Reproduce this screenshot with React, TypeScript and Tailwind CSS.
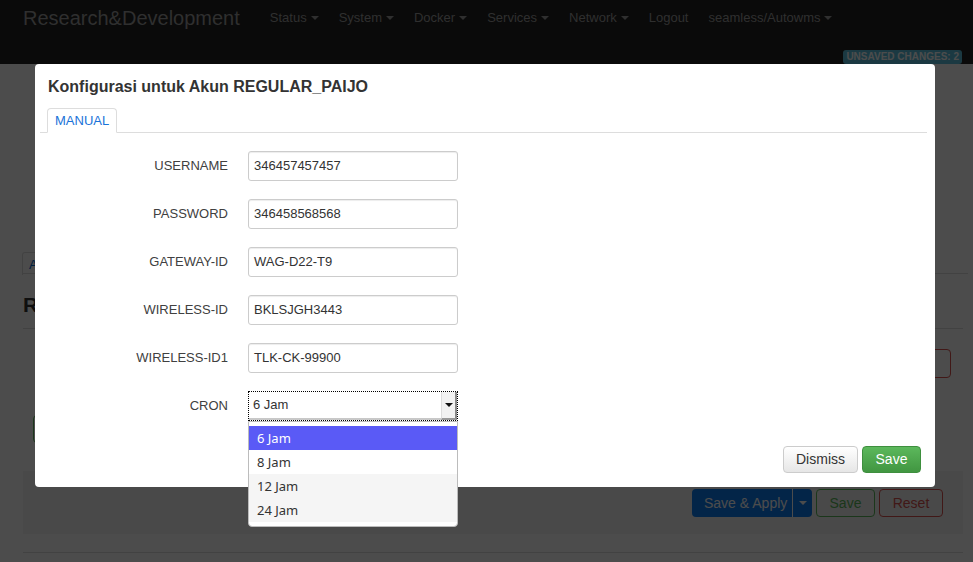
import React from "react";

const MENU = [
  { label: "Status", caret: true },
  { label: "System", caret: true },
  { label: "Docker", caret: true },
  { label: "Services", caret: true },
  { label: "Network", caret: true },
  { label: "Logout", caret: false },
  { label: "seamless/Autowms", caret: true },
];

const FIELDS = [
  { label: "USERNAME", value: "346457457457" },
  { label: "PASSWORD", value: "346458568568" },
  { label: "GATEWAY-ID", value: "WAG-D22-T9" },
  { label: "WIRELESS-ID", value: "BKLSJGH3443" },
  { label: "WIRELESS-ID1", value: "TLK-CK-99900" },
];

const CRON_OPTIONS = ["6 Jam", "8 Jam", "12 Jam", "24 Jam"];

const Caret: React.FC<{ className?: string }> = ({ className }) => (
  <span
    className={`inline-block w-0 h-0 border-l-[4px] border-r-[4px] border-t-[4px] border-l-transparent border-r-transparent ${className ?? ""}`}
  />
);

const Navbar: React.FC = () => (
  <div className="h-[64px] bg-[#222222] flex flex-col">
    <div className="h-[36px] flex items-center pl-[23px]">
      <span className="text-[20px] text-[#9d9d9d] leading-none">Research&amp;Development</span>
      <div className="flex items-center gap-[20px] ml-[30px] text-[13px] text-[#9d9d9d]">
        {MENU.map((m) => (
          <span key={m.label} className="flex items-center">
            {m.label}
            {m.caret && <Caret className="ml-[4px] border-t-[#9d9d9d]" />}
          </span>
        ))}
      </div>
    </div>
    <div className="flex justify-end pr-[11px] mt-[15px]">
      <span className="h-[14px] px-[3px] rounded-[3px] bg-[#5bc0de] text-white text-[10px] font-bold leading-[14px]">
        UNSAVED CHANGES: 2
      </span>
    </div>
  </div>
);

const PageBehind: React.FC = () => (
  <div className="pl-[23px] pr-[5px]">
    <div className="h-[188px]" />
    <div className="h-[22px] border-b border-[#dddddd] flex">
      <div className="h-[23px] px-[6px] border border-b-0 border-[#dddddd] rounded-t-[3px] text-[13px] text-[#0069d6] leading-[23px] -ml-[1px]">
        Admin
      </div>
    </div>
    <div className="mr-[5px]">
      <div className="h-[55px] border-b border-[#dddddd] flex items-end pb-[8px]">
        <span className="text-[21px] font-bold text-[#333]">Regular</span>
      </div>
      <div className="h-[20px]" />
      <div className="flex justify-end pr-[12px]">
        <div className="w-[80px] h-[29px] border border-[#d9534f] rounded-[4px]" />
      </div>
      <div className="h-[37px]" />
      <div className="pl-[10px]">
        <div className="w-[80px] h-[28px] border border-[#5cb85c] rounded-[4px]" />
      </div>
      <div className="h-[28px]" />
      <div className="h-[63px] bg-[#f5f5f5] flex justify-end items-start pt-[18px] pr-[20px] gap-[4px] text-[14px]">
        <div className="w-[120px] h-[28px] flex rounded-[4px] bg-[#0a7cf0] text-white">
          <span className="flex-1 pl-[12px] leading-[28px] whitespace-nowrap">Save &amp; Apply</span>
          <span className="w-[20px] border-l border-white flex items-center justify-center">
            <Caret className="border-t-white" />
          </span>
        </div>
        <div className="w-[59px] h-[28px] border border-[#5cb85c] rounded-[4px] text-[#5cb85c] leading-[26px] text-center">
          Save
        </div>
        <div className="w-[64px] h-[28px] border border-[#d9534f] rounded-[4px] text-[#d9534f] leading-[26px] text-center">
          Reset
        </div>
      </div>
      <div className="h-[19px] border-b border-[#dddddd]" />
    </div>
  </div>
);

const CronSelect: React.FC = () => (
  <div className="relative w-[210px] h-[30px]">
    <div className="w-full h-full border border-dotted border-black flex">
      <div className="flex-1 flex items-center pl-[4px] text-[13px] text-[#333] border-b-[2px] border-[#c8c8c8] bg-white">
        6 Jam
      </div>
      <div className="w-[16px] bg-[#f2f2f2] border-l border-[#ddd] border-r-[2px] border-b-[2px] border-r-[#888] border-b-[#999] flex items-center justify-center">
        <Caret className="border-t-[#111] border-l-[3px] border-r-[3px]" />
      </div>
    </div>
    <div
      className="absolute left-0 top-[30px] w-[210px] border border-[#bcbcbc] rounded-b-[4px] bg-white pt-[4px] pb-[4px] text-[13px] text-[#333] z-10"
      style={{ fontFamily: '"Noto Sans", sans-serif' }}
    >
      {CRON_OPTIONS.map((o, i) => (
        <div
          key={o}
          className={
            i === 0
              ? "h-[24px] leading-[24px] pl-[8px] bg-[#5a5af6] text-white"
              : i === 1
              ? "h-[24px] leading-[24px] pl-[8px] bg-white"
              : "h-[24px] leading-[24px] pl-[8px] bg-[#f5f5f5]"
          }
        >
          {o}
        </div>
      ))}
    </div>
  </div>
);

const ConfigModal: React.FC = () => (
  <div className="absolute left-[35px] top-[64px] w-[900px] h-[423px] bg-white rounded-[4px] flex flex-col z-20">
    <div className="px-[13px] pt-[12px] h-[35px] text-[16px] font-bold text-[#333] leading-[22px]">
      Konfigurasi untuk Akun REGULAR_PAIJO
    </div>
    <div className="ml-[5px] mr-[8px] mt-[9px] border-b border-[#ddd] flex pl-[7px]">
      <div className="h-[25px] -mb-[1px] px-[7px] border border-b-white border-[#ddd] rounded-t-[4px] bg-white text-[13px] text-[#1a73d9] leading-[24px]">
        MANUAL
      </div>
    </div>
    <div className="mt-[18px] flex flex-col gap-[18px] text-[13px]">
      {FIELDS.map((f) => (
        <div key={f.label} className="flex items-center">
          <div className="w-[193px] text-right text-[#404040]">{f.label}</div>
          <div className="ml-[20px] w-[210px] h-[30px] border border-[#ccc] rounded-[3px] shadow-[inset_0_1px_1px_rgba(0,0,0,0.075)] flex items-center pl-[5px] text-[#333]">
            {f.value}
          </div>
        </div>
      ))}
      <div className="flex items-center">
        <div className="w-[193px] text-right text-[#404040]">CRON</div>
        <div className="ml-[20px]">
          <CronSelect />
        </div>
      </div>
    </div>
    <div className="mt-auto flex justify-end gap-[4px] pr-[14px] pb-[14px] text-[14px]">
      <button className="w-[75px] h-[27px] border border-[#ccc] rounded-[4px] bg-gradient-to-b from-white to-[#e6e6e6] text-[#333]">
        Dismiss
      </button>
      <button className="w-[59px] h-[27px] border border-[#3e8f3e] rounded-[4px] bg-gradient-to-b from-[#5cb85c] to-[#419641] text-white">
        Save
      </button>
    </div>
  </div>
);

export default function App() {
  return (
    <div
      className="relative w-[973px] h-[562px] overflow-hidden bg-white"
      style={{ fontFamily: '"Liberation Sans", Arial, sans-serif' }}
    >
      <Navbar />
      <PageBehind />
      {/* modal backdrop */}
      <div className="absolute inset-0 z-10 bg-[rgba(0,0,0,0.7)]" />
      <ConfigModal />
    </div>
  );
}
